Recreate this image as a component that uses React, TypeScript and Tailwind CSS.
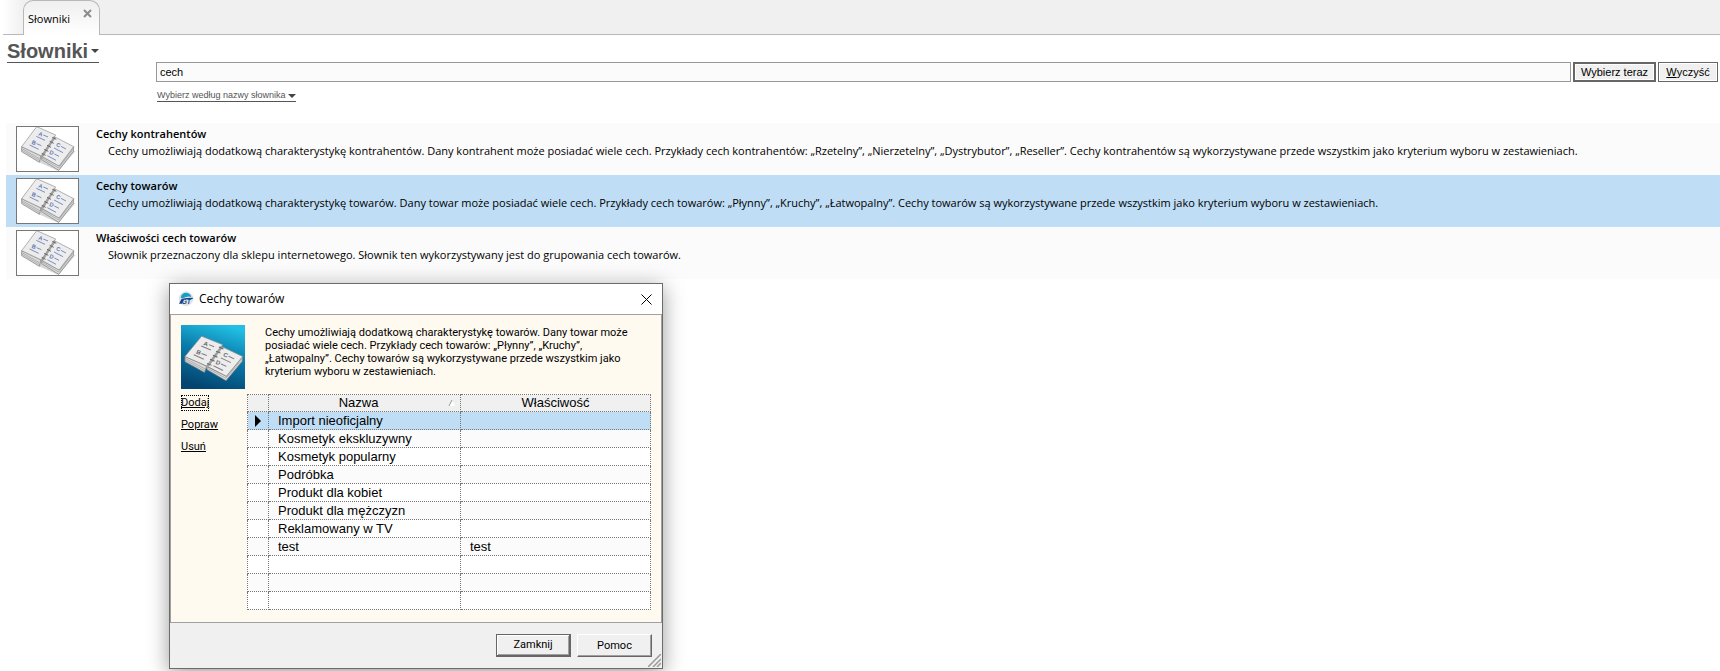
import { useState } from 'react';

interface Dictionary {
  id: string;
  name: string;
  description: string;
}

interface Feature {
  name: string;
  property: string;
}

const DICTIONARIES: Dictionary[] = [
  {
    id: 'contractors',
    name: 'Cechy kontrahentów',
    description:
      'Cechy umożliwiają dodatkową charakterystykę kontrahentów. Dany kontrahent może posiadać wiele cech. Przykłady cech kontrahentów: „Rzetelny”, „Nierzetelny”, „Dystrybutor”, „Reseller”. Cechy kontrahentów są wykorzystywane przede wszystkim jako kryterium wyboru w zestawieniach.',
  },
  {
    id: 'goods',
    name: 'Cechy towarów',
    description:
      'Cechy umożliwiają dodatkową charakterystykę towarów. Dany towar może posiadać wiele cech. Przykłady cech towarów: „Płynny”, „Kruchy”, „Łatwopalny”. Cechy towarów są wykorzystywane przede wszystkim jako kryterium wyboru w zestawieniach.',
  },
  {
    id: 'properties',
    name: 'Właściwości cech towarów',
    description:
      'Słownik przeznaczony dla sklepu internetowego. Słownik ten wykorzystywany jest do grupowania cech towarów.',
  },
];

const FEATURES: Feature[] = [
  { name: 'Import nieoficjalny', property: '' },
  { name: 'Kosmetyk ekskluzywny', property: '' },
  { name: 'Kosmetyk popularny', property: '' },
  { name: 'Podróbka', property: '' },
  { name: 'Produkt dla kobiet', property: '' },
  { name: 'Produkt dla mężczyzn', property: '' },
  { name: 'Reklamowany w TV', property: '' },
  { name: 'test', property: 'test' },
  { name: '', property: '' },
  { name: '', property: '' },
  { name: '', property: '' },
];

function Notebook({ ink }: { ink: string }) {
  return (
    <g>
      {/* page stack under each half */}
      <path d="M35 80 L35 95 L88 127 L94 108 Z" fill="#dadada" stroke="#777" strokeWidth="2" />
      <path d="M35 85 L90 117 M35 90 L89 122" stroke="#888" strokeWidth="1.5" fill="none" />
      <path d="M92 108 L95 119 L146 151 L190 94 L191 80 L147 138 Z" fill="#dedede" stroke="#777" strokeWidth="2" />
      <path d="M93 113 L146 144 L190 87" stroke="#999" strokeWidth="2" fill="none" />
      <path d="M80 20 L137 45 L94 108 L35 80 Z" fill="#ececec" stroke="#8c8c8c" strokeWidth="2" />
      <path d="M137 52 L191 80 L147 138 L94 108 Z" fill="#ededed" stroke="#8c8c8c" strokeWidth="2" />
      {/* spiral */}
      <path d="M135 50 L94 112" stroke="#a0a0a0" strokeWidth="7" />
      <path
        d="M127 52 L139 58 M119 64 L131 70 M111 76 L123 82 M103 88 L115 94 M95 100 L107 106"
        stroke="#666"
        strokeWidth="3"
        fill="none"
      />
      <g fill={ink} fontFamily="Liberation Sans, sans-serif" fontSize="17" fontWeight="bold">
        <text x="84" y="46" transform="rotate(20 84 46)">A</text>
        <text x="64" y="71" transform="rotate(20 64 71)">B</text>
        <text x="137" y="79" transform="rotate(20 137 79)">C</text>
        <text x="117" y="101" transform="rotate(20 117 101)">D</text>
      </g>
      <path
        d="M100 45 L114 51 M79 49 L105 61 M80 71 L94 77 M59 75 L86 88 M153 79 L168 87 M132 84 L159 98 M133 102 L147 109 M112 107 L138 121"
        stroke={ink}
        strokeOpacity="0.8"
        strokeWidth="3"
        fill="none"
      />
    </g>
  );
}

function DictionaryIcon() {
  return (
    <svg viewBox="21 21 183 132" className="block h-[44px] w-[61px]" aria-hidden="true">
      <path d="M33 92 L90 128 L146 153 L196 94 L180 88 L90 120 Z" fill="#d6d6d6" />
      <Notebook ink="#5f74b5" />
    </svg>
  );
}

function DialogPicture() {
  return (
    <svg viewBox="0 0 192 192" className="block size-16 shrink-0" aria-hidden="true">
      <defs>
        <linearGradient id="sea" x1="0.7" y1="0" x2="0.4" y2="1">
          <stop offset="0" stopColor="#22bfe4" />
          <stop offset="0.45" stopColor="#0a7cab" />
          <stop offset="1" stopColor="#034470" />
        </linearGradient>
      </defs>
      <rect width="192" height="192" fill="url(#sea)" />
      <g transform="matrix(1.11 0 0 1.02 -27 13)">
        <Notebook ink="#666" />
      </g>
    </svg>
  );
}

function AppLogo() {
  return (
    <svg viewBox="0 0 48 48" className="size-4" aria-hidden="true">
      <circle cx="24" cy="23" r="21" fill="#dfe5ea" stroke="#c3ccd3" strokeWidth="1" />
      <path d="M8 20 Q11 5 25 5 Q37 6 40 18 Q32 15 24 18 Q16 22 8 20 Z" fill="#159fc6" />
      <path d="M3 38 L11 23 Q24 20 46 20 L43 24 L18 25 L12 38 Z" fill="#1d4289" />
      <text x="11" y="39" fill="#1d4289" fontFamily="Liberation Sans, sans-serif" fontSize="20" fontWeight="bold" fontStyle="italic">
        GT
      </text>
    </svg>
  );
}

function FeatureTable() {
  const [selected, setSelected] = useState(0);

  return (
    <table className="w-full table-fixed border-collapse bg-white font-['Liberation_Sans',Arial,sans-serif] text-[13px] leading-4">
      <colgroup>
        <col className="w-[21px]" />
        <col className="w-[192px]" />
        <col />
      </colgroup>
      <thead>
        <tr className="h-[17px] bg-[#f0f0f0]">
          <td className="border border-dotted border-[#777] p-0" />
          <th scope="col" className="border border-dotted border-[#777] p-0 font-normal">
            <span className="flex items-center">
              <span className="flex-1">Nazwa</span>
              <svg viewBox="0 0 8 8" className="mr-1 size-2" aria-hidden="true">
                <path d="M1 7 L4 1 L7 7 Z" fill="#fff" />
                <path d="M1 7 L4 1" stroke="#999" fill="none" />
              </svg>
            </span>
          </th>
          <th scope="col" className="border border-dotted border-[#777] p-0 font-normal">Właściwość</th>
        </tr>
      </thead>
      <tbody>
        {FEATURES.map((feature, idx) => (
          <tr
            key={idx}
            onClick={() => setSelected(idx)}
            className={`h-[18px] ${idx === selected ? 'bg-[#bfddf5]' : idx % 2 ? 'bg-[#fbfbfb]' : 'bg-white'}`}
          >
            <td className="border border-dotted border-[#777] p-0">
              {idx === selected && (
                <svg viewBox="0 0 6 12" className="ml-[7px] block h-3 w-1.5" aria-hidden="true">
                  <path d="M0 0 L6 6 L0 12 Z" fill="#000" />
                </svg>
              )}
            </td>
            <td className="border border-dotted border-[#777] py-0 pr-1 pl-[9px]">{feature.name}</td>
            <td className="border border-dotted border-[#777] py-0 pr-1 pl-[9px]">{feature.property}</td>
          </tr>
        ))}
      </tbody>
    </table>
  );
}

function FeaturesDialog() {
  return (
    <section
      role="dialog"
      aria-labelledby="dialog-title"
      className="absolute top-[283px] left-[169px] flex w-[494px] flex-col border border-[#6b6b6b] bg-[#f0f0f0] font-['Roboto','Noto_Sans',sans-serif] shadow-[0_4px_20px_rgba(0,0,0,0.4)]"
    >
      <header className="flex h-[30px] items-center bg-white pr-[9px] pl-2">
        <AppLogo />
        <h2 id="dialog-title" className="ml-[5px] flex-1 font-['Open_Sans','Noto_Sans',sans-serif] text-[12px]">Cechy towarów</h2>
        <button aria-label="Zamknij okno" className="p-px">
          <svg viewBox="0 0 11 11" className="size-[11px]" aria-hidden="true">
            <path d="M0.5 0.5 L10.5 10.5 M10.5 0.5 L0.5 10.5" stroke="#000" fill="none" />
          </svg>
        </button>
      </header>

      <div className="flex flex-col border border-[#a0a0a0] bg-[#fffaf0] pt-[10px] pr-[10px] pb-3 pl-[10px]">
        <div className="flex h-[69px]">
          <DialogPicture />
          <p className="ml-5 w-[364px] pt-px text-[11px] leading-[13px]">{DICTIONARIES[1].description}</p>
        </div>
        <div className="flex">
          <nav className="flex w-[66px] shrink-0 flex-col items-start gap-[6px] pt-px text-[11px] leading-4">
            <a href="#dodaj" className="underline outline-1 outline-black outline-dotted -outline-offset-1">Dodaj</a>
            <a href="#popraw" className="underline">Popraw</a>
            <a href="#usun" className="underline">Usuń</a>
          </nav>
          <FeatureTable />
        </div>
      </div>

      <footer className="relative flex h-[45px] justify-end gap-[6px] pt-[11px] pr-[10px] text-[11px]">
        <button className="h-[23px] w-[75px] border border-r-2 border-b-2 border-[#666] pt-px shadow-[inset_1px_1px_0_#fff,inset_-1px_-1px_0_#a0a0a0]">
          Zamknij
        </button>
        <button className="h-[23px] w-[75px] border border-t-white border-r-[#666] border-b-[#666] border-l-white pt-px shadow-[inset_-1px_-1px_0_#a0a0a0]">
          Pomoc
        </button>
        <svg viewBox="0 0 13 13" className="absolute right-px bottom-px size-[13px]" aria-hidden="true">
          <path d="M0 13 L13 0 M5 13 L13 5 M9 13 L13 9" stroke="#999" strokeWidth="1.5" fill="none" />
        </svg>
      </footer>
    </section>
  );
}

export default function App() {
  const [query, setQuery] = useState('cech');
  const [active, setActive] = useState('goods');

  return (
    <div className="relative min-h-screen overflow-hidden bg-white font-['Open_Sans','Noto_Sans',sans-serif] text-black">
      {/* Tab strip */}
      <div className="ml-[3px] flex h-[35px] border-b border-[#b8b8b8] bg-linear-to-r from-white to-[#f0f0f0] to-[20px] pl-5">
        <div className="flex h-[35px] w-[77px] items-start justify-between rounded-t-[10px] border border-b-0 border-[#b8b8b8] bg-linear-to-b from-[#efefef] to-white pr-[7px] pl-1">
          <span className="mt-[10px] text-[11px] leading-4">Słowniki</span>
          <button aria-label="Zamknij kartę" className="mt-2">
            <svg viewBox="0 0 9 9" className="block size-[9px]" aria-hidden="true">
              <path d="M1 1 L8 8 M8 1 L1 8" stroke="#8c8c8c" strokeWidth="2" fill="none" />
            </svg>
          </button>
        </div>
      </div>

      {/* Heading and search */}
      <div className="flex h-[88px] items-start font-['Liberation_Sans',Arial,sans-serif]">
        <div className="w-[156px] shrink-0 pl-[7px]">
          <h1>
            <button className="flex h-7 items-center gap-[3px] border-b border-[#555] pt-1 text-[20px] font-bold text-[#555]">
              Słowniki
              <svg viewBox="0 0 8 4" className="h-1 w-2" aria-hidden="true">
                <path d="M0 0 H8 L4 4 Z" fill="#444" />
              </svg>
            </button>
          </h1>
        </div>
        <div className="flex flex-1 flex-col items-start pt-[27px] pr-[2px]">
          <form className="flex w-full gap-[2px] text-[11px]" onSubmit={e => e.preventDefault()}>
            <input
              aria-label="Szukaj słownika"
              value={query}
              onChange={e => setQuery(e.target.value)}
              className="h-5 min-w-0 flex-1 border border-[#999] bg-[#fbfbfb] px-[3px] outline-none"
            />
            <button type="submit" className="h-5 w-[83px] border-2 border-[#666] bg-[#f0f0f0] leading-4 shadow-[inset_0_0_0_1px_#fff]">
              Wybierz teraz
            </button>
            <button type="button" onClick={() => setQuery('')} className="h-5 w-[60px] border border-[#666] bg-[#f0f0f0] leading-4 shadow-[inset_0_0_0_1px_#fff]">
              <u>W</u>yczyść
            </button>
          </form>
          <button className="mt-2 ml-px flex items-center gap-[3px] border-b border-[#555] text-[9px] leading-[11px] text-[#555]">
            Wybierz według nazwy słownika
            <svg viewBox="0 0 8 4" className="h-1 w-2" aria-hidden="true">
              <path d="M0 0 H8 L4 4 Z" fill="#444" />
            </svg>
          </button>
        </div>
      </div>

      {/* Dictionary list */}
      <ul className="ml-[6px]">
        {DICTIONARIES.map(item => (
          <li
            key={item.id}
            onClick={() => setActive(item.id)}
            className={`flex gap-[17px] py-[3px] pl-[10px] ${item.id === active ? 'bg-[#bfddf5]' : 'bg-[#fbfbfb]'}`}
          >
            <div className="shrink-0 border border-[#777] bg-white">
              <DictionaryIcon />
            </div>
            <div className="text-[11px]">
              <h3 className="leading-[15px] font-semibold">{item.name}</h3>
              <p className="pl-3 leading-[19px]">{item.description}</p>
            </div>
          </li>
        ))}
      </ul>

      <FeaturesDialog />
    </div>
  );
}
